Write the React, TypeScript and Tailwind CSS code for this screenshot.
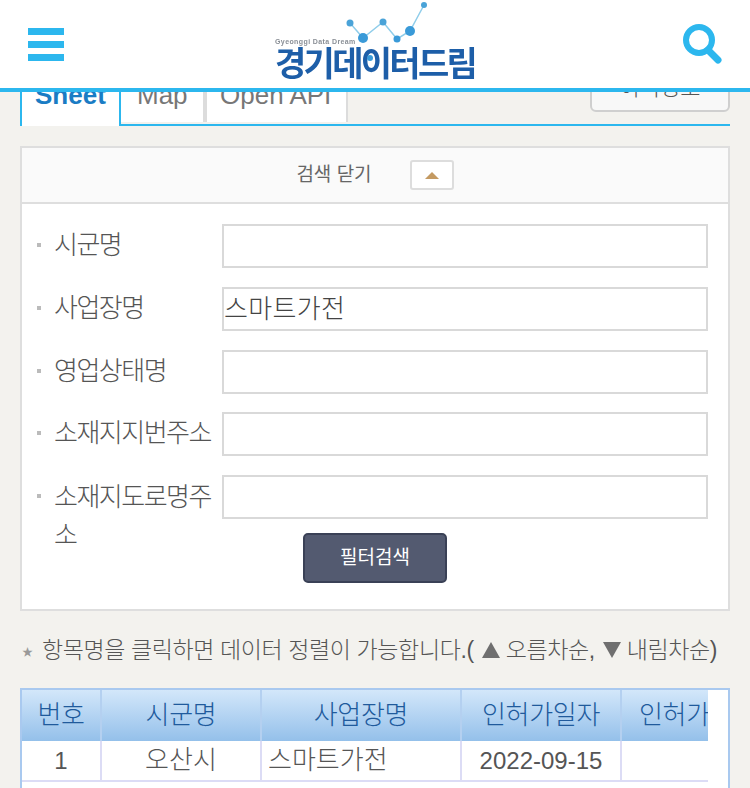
import React from 'react'

const fields = [
  { label: '시군명', value: '' },
  { label: '사업장명', value: '스마트가전' },
  { label: '영업상태명', value: '' },
  { label: '소재지지번주소', value: '' },
]

const font = "font-['Liberation_Sans','Noto_Sans_CJK_KR',sans-serif]"

const Logo = () => (
  <div className="relative ml-2 h-[88px] w-[204px] blur-[0.5px]">
    <svg className="absolute left-0 top-0" width="204" height="88" viewBox="0 0 204 88" fill="none">
      <path d="M75 23 L88 38 L108 22 L122 39 L135 31 L149 5" stroke="#8fcdea" strokeWidth="1.5" />
      <circle cx="75" cy="23" r="3.5" fill="#4aa3d8" />
      <circle cx="88" cy="38" r="5" fill="#3a9ad8" />
      <circle cx="108" cy="22" r="3.5" fill="#4aa3d8" />
      <circle cx="122" cy="39" r="3.5" fill="#3a9ad8" />
      <circle cx="135" cy="31" r="5" fill="#3a9ad8" />
      <circle cx="149" cy="5" r="3" fill="#4aa3d8" />
    </svg>
    <span className="absolute left-0 top-[37px] whitespace-nowrap text-[7px] font-bold leading-[9px] tracking-[0.4px] text-[#8a8f96]">
      Gyeonggi Data Dream
    </span>
    <span className="absolute left-0 top-[45px] whitespace-nowrap text-[34px] font-bold leading-[38px] tracking-[-2.7px] text-[#1d5ea8]">
      경기데이터드림
    </span>
    <div className="absolute left-[92px] top-[55px] h-[6px] w-[6px] rounded-full bg-[#3a9ad8]" />
  </div>
)

const Bullet = () => <div className="mr-[13px] mt-[19px] h-[4px] w-[4px] shrink-0 bg-[#bbb]" />

const Field = ({ label, value }: { label: string; value: string }) => (
  <div className="flex items-start">
    <div className="flex w-[200px] items-start pl-[15px]">
      <Bullet />
      <span className="flex-1 text-[26px] font-light leading-[42px] tracking-[-1.5px] text-[#555]">{label}</span>
    </div>
    <div className="h-11 w-[486px] whitespace-nowrap border-2 border-[#d9d9d9] bg-white text-[26px] font-light leading-[41px] tracking-[0.3px] text-[#444]">
      {value}
    </div>
  </div>
)

const headers = [
  { label: '번호', cls: 'w-[80px] justify-center' },
  { label: '시군명', cls: 'w-[160px] justify-center' },
  { label: '사업장명', cls: 'w-[200px] justify-center' },
  { label: '인허가일자', cls: 'w-[160px] justify-center' },
  { label: '인허가', cls: 'w-[88px] pl-[17px]' },
]

const App = () => {
  return (
    <div className={`relative h-[788px] w-[750px] overflow-hidden bg-[#f3f2ee] ${font}`}>
      {/* header */}
      <div className="absolute inset-x-0 top-0 z-10 flex h-[92px] items-center justify-between border-b-4 border-[#2cb7ee] bg-white px-7">
        <div className="flex w-9 flex-col gap-[6px]">
          <div className="h-[7px] bg-[#2cb7ee]" />
          <div className="h-[7px] bg-[#2cb7ee]" />
          <div className="h-[7px] bg-[#2cb7ee]" />
        </div>
        <Logo />
        <svg width="40" height="42" viewBox="0 0 40 42" fill="none">
          <circle cx="17" cy="17" r="13" stroke="#2cb7ee" strokeWidth="6" />
          <path d="M26 27 L36 37" stroke="#2cb7ee" strokeWidth="7" strokeLinecap="round" />
        </svg>
      </div>

      <div className="px-5 pt-[76px]">
        {/* tabs */}
        <div className="flex h-[50px] items-end justify-between border-b-2 border-[#2cb7ee]">
          <div className="flex h-[50px] text-[26px] leading-[43px]">
            <div className="-mb-[2px] h-[52px] w-[101px] border-x-2 border-[#2cb7ee] bg-white pl-[13px] font-bold text-[#1a7cc4]">Sheet</div>
            <div className="h-[48px] w-[84px] border-r-2 border-[#dcdcdc] bg-white pl-[16px] text-[#777]">Map</div>
            <div className="h-[48px] w-[143px] border-x-2 border-[#dcdcdc] bg-white pl-[13px] text-[#777]">Open API</div>
          </div>
          <div className="mb-[12px] flex h-[36px] w-[140px] items-end justify-center rounded-b-[6px] border-2 border-[#cfcfcf] bg-[#f8f8f8] pb-[9px] text-[22px] font-light leading-[26px] text-[#555]">
            이력정보
          </div>
        </div>

        {/* search panel */}
        <div className="mt-5 h-[465px] border-2 border-[#dedede] bg-white">
          <div className="flex h-[56px] items-center justify-center border-b-2 border-[#dedede] bg-[#fafafa]">
            <span className="text-[19px] text-[#666]">검색 닫기</span>
            <div className="ml-[38px] flex h-[30px] w-[44px] items-center justify-center rounded-[3px] border-2 border-[#ddd] bg-white">
              <div className="h-0 w-0 border-x-[7px] border-b-[7px] border-x-transparent border-b-[#c49a62]" />
            </div>
          </div>
          <div className="flex flex-col gap-[18.75px] pt-[20px]">
            {fields.map((f) => (
              <Field key={f.label} label={f.label} value={f.value} />
            ))}
            <div className="flex items-start">
              <div className="flex w-[200px] items-start pl-[15px]">
                <Bullet />
                <span className="mt-[3px] flex-1 text-[26px] font-light leading-[38px] tracking-[-1.5px] text-[#555]">소재지도로명주소</span>
              </div>
              <div className="h-11 w-[486px] border-2 border-[#d9d9d9] bg-white" />
            </div>
          </div>
          <div className="-mt-[21px] ml-[281px] flex h-[50px] w-[144px] items-center justify-center rounded-[5px] border-2 border-[#3a4156] bg-[#535a70] text-[19px] text-white">
            필터검색
          </div>
        </div>

        {/* note */}
        <div className="mt-[19px] flex h-[40px] items-center whitespace-nowrap pl-[2px] text-[23px] font-light tracking-[-0.4px] text-[#555]">
          <span className="mt-[5px] w-[20px] text-[11px] text-[#999]">★</span>
          항목명을 클릭하면 데이터 정렬이 가능합니다.(
          <div className="ml-[8px] mr-[6px] h-0 w-0 border-x-[9px] border-b-[16px] border-x-transparent border-b-[#6f6f6f]" />
          오름차순,
          <div className="ml-[8px] mr-[6px] h-0 w-0 border-x-[9px] border-t-[16px] border-x-transparent border-t-[#6f6f6f]" />
          내림차순)
        </div>

        {/* table */}
        <div className="mt-[18px] h-[110px] overflow-hidden border-2 border-b-0 border-[#a9c9ef] bg-white">
          <div className="w-[686px] overflow-hidden">
            <div className="flex h-[51px] w-[688px] bg-gradient-to-b from-[#d3e7fa] to-[#94c0ea] text-[26px] font-light tracking-[-0.3px] text-[#205a9c]">
              {headers.map((h) => (
                <div key={h.label} className={`${h.cls} flex items-center whitespace-nowrap border-r-2 border-[#b4d0f0]`}>
                  {h.label}
                </div>
              ))}
            </div>
            <div className="flex h-[41px] w-[688px] border-b-2 border-[#dcdcf5] font-light text-[#555]">
              <div className="flex w-[80px] items-center justify-center border-r-2 border-[#dcdcf5] text-[24px]">1</div>
              <div className="flex w-[160px] items-center justify-center border-r-2 border-[#dcdcf5] text-[26px]">오산시</div>
              <div className="flex w-[200px] items-center border-r-2 border-[#dcdcf5] pl-[6px] text-[26px]">스마트가전</div>
              <div className="flex w-[160px] items-center justify-center border-r-2 border-[#dcdcf5] text-[24px]">2022-09-15</div>
              <div className="w-[88px]" />
            </div>
          </div>
        </div>
      </div>
    </div>
  )
}

export default App
